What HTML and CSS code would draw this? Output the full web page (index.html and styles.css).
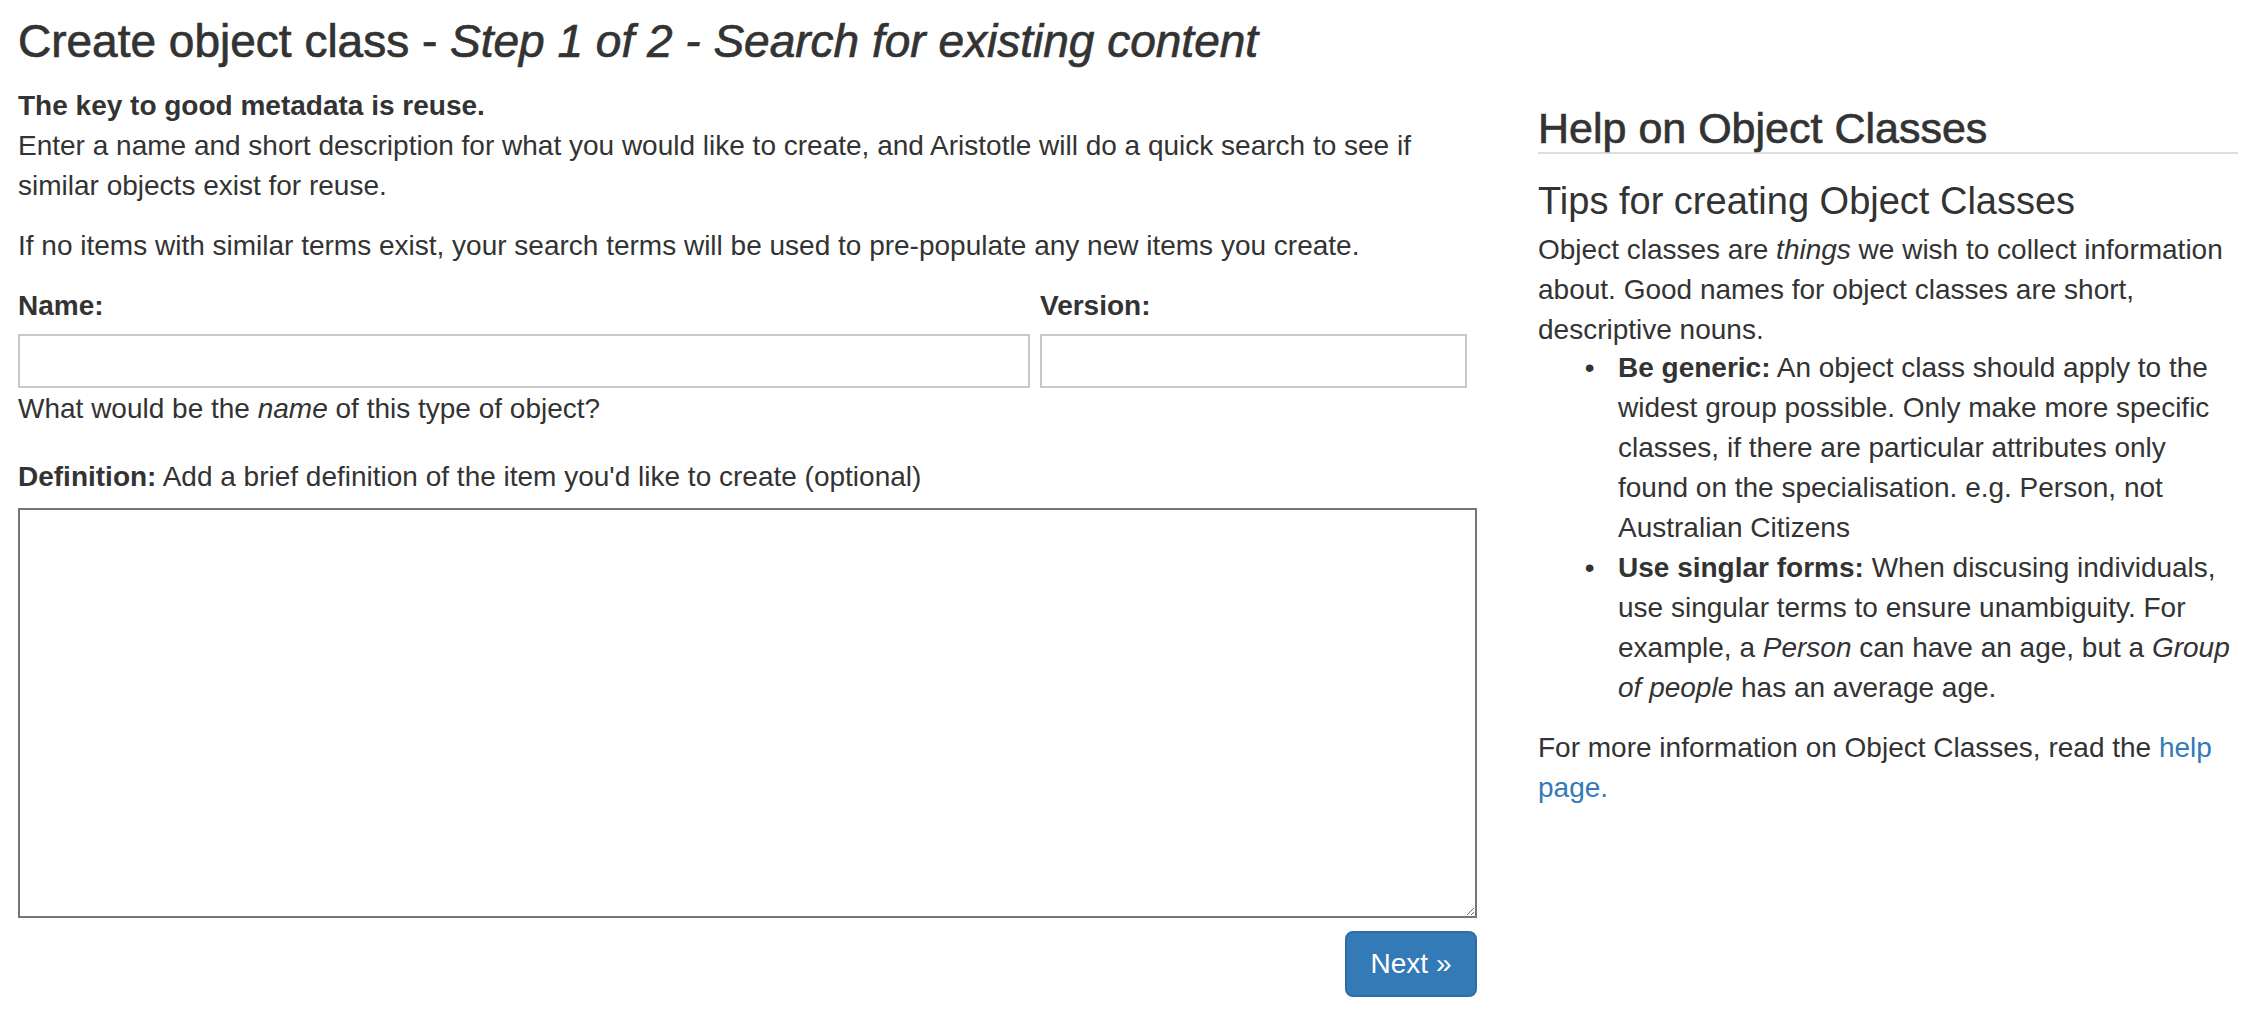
FILE: index.html
```html
<!DOCTYPE html>
<html lang="en">
<head>
<meta charset="utf-8">
<title>Create object class</title>
<link rel="stylesheet" href="styles.css">
</head>
<body>
<div class="page">
  <h1 class="page-title">Create object class - <em>Step 1 of 2 - Search for existing content</em></h1>
  <div class="layout">
    <main class="main-col">
      <p class="intro"><strong>The key to good metadata is reuse.</strong><br>Enter a name and short description for what you would like to create, and Aristotle will do a quick search to see if similar objects exist for reuse.</p>
      <p class="intro">If no items with similar terms exist, your search terms will be used to pre-populate any new items you create.</p>
      <form class="create-form">
        <div class="field-row">
          <div class="field field-name">
            <label class="field-label" for="name">Name:</label>
            <input class="text-input" id="name" type="text">
          </div>
          <div class="field field-version">
            <label class="field-label" for="version">Version:</label>
            <input class="text-input" id="version" type="text">
          </div>
        </div>
        <p class="help-text">What would be the <em>name</em> of this type of object?</p>
        <label class="def-label" for="definition"><strong>Definition:</strong> Add a brief definition of the item you'd like to create (optional)</label>
        <textarea class="def-input" id="definition"></textarea>
        <div class="actions">
          <button class="btn-next" type="button">Next »</button>
        </div>
      </form>
    </main>
    <aside class="side-col">
      <h2 class="help-title">Help on Object Classes</h2>
      <h3 class="tips-title">Tips for creating Object Classes</h3>
      <p class="tips-text">Object classes are <em>things</em> we wish to collect information about. Good names for object classes are short, descriptive nouns.</p>
      <ul class="tips-list">
        <li><strong>Be generic:</strong> An object class should apply to the widest group possible. Only make more specific classes, if there are particular attributes only found on the specialisation. e.g. Person, not Australian Citizens</li>
        <li><strong>Use singlar forms:</strong> When discusing individuals, use singular terms to ensure unambiguity. For example, a <em>Person</em> can have an age, but a <em>Group of people</em> has an average age.</li>
      </ul>
      <p class="more-text">For more information on Object Classes, read the <a class="help-link" href="#">help page.</a></p>
    </aside>
  </div>
</div>
</body>
</html>
```

FILE: styles.css
```css
html, body {
  margin: 0;
  padding: 0;
  background: #ffffff;
}

body {
  font-family: "Liberation Sans", Arial, Helvetica, sans-serif;
  font-size: 28px;
  line-height: 40px;
  color: #333333;
}

.page {
  padding: 16px 12px 0 18px;
}

.page-title {
  margin: 0;
  font-size: 46px;
  line-height: 50px;
  font-weight: 400;
  color: #333333;
  -webkit-text-stroke: 0.7px #333333;
}

.layout {
  display: flex;
  gap: 61px;
  margin-top: 20px;
}

.main-col {
  flex: none;
  width: 1459px;
}

.intro {
  margin: 0 0 20px;
}

.create-form {
  margin: 0;
}

.field-row {
  display: flex;
  gap: 10px;
}

.field {
  display: flex;
  flex-direction: column;
}

.field-name {
  width: 1012px;
}

.field-version {
  width: 427px;
}

.field-label {
  display: block;
  font-weight: 700;
  margin-bottom: 8px;
}

.text-input {
  display: block;
  box-sizing: border-box;
  width: 100%;
  height: 54px;
  margin: 0;
  border: 2px solid #c8c8c8;
  border-radius: 0;
  background: #ffffff;
  font: inherit;
  padding: 0 10px;
}

.help-text {
  margin: 1px 0 0;
}

.def-label {
  display: block;
  margin-top: 28px;
  margin-bottom: 11px;
}

.def-input {
  display: block;
  box-sizing: border-box;
  width: 1459px;
  height: 410px;
  margin: 0;
  border: 2px solid #767676;
  border-radius: 0;
  background: #ffffff;
  font: inherit;
  padding: 4px;
}

.actions {
  display: flex;
  justify-content: flex-end;
  margin-top: 13px;
}

.btn-next {
  box-sizing: border-box;
  width: 132px;
  height: 66px;
  padding: 0;
  border: 2px solid #2e6da4;
  border-radius: 8px;
  background: #337ab7;
  color: #ffffff;
  font-family: "Liberation Sans", Arial, Helvetica, sans-serif;
  font-size: 28px;
  line-height: 40px;
}

.side-col {
  flex: none;
  width: 700px;
}

.help-title {
  margin: 19px 0 0;
  font-size: 43px;
  line-height: 47px;
  font-weight: 400;
  color: #333333;
  -webkit-text-stroke: 0.7px #333333;
  border-bottom: 2px solid #dedede;
}

.tips-title {
  margin: 26px 0 0;
  font-size: 38px;
  line-height: 42px;
  font-weight: 400;
  color: #333333;
}

.tips-text {
  margin: 8px 0 0;
}

.tips-list {
  margin: -2px 0 20px;
  padding-left: 80px;
}

.tips-list li::marker {
  content: "\2022\00a0\00a0\00a0";
}

.more-text {
  margin: 0;
}

.help-link {
  color: #337ab7;
  text-decoration: none;
}
```
